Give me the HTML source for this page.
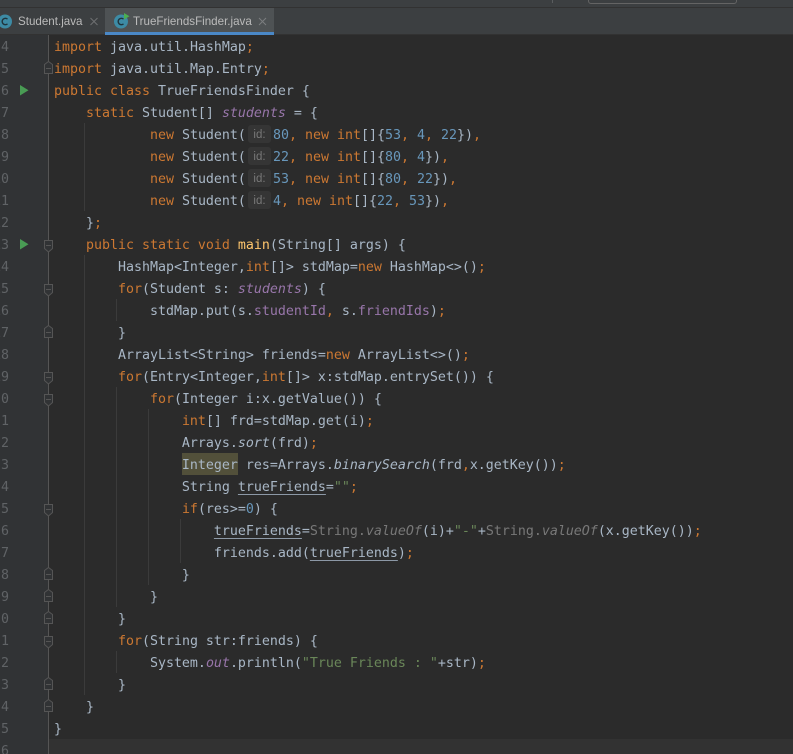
<!DOCTYPE html>
<html><head><meta charset="utf-8"><style>
html,body{margin:0;padding:0;background:#2b2b2b}
#r{position:relative;width:793px;height:754px;overflow:hidden;background:#2b2b2b;font-family:"DejaVu Sans Mono","Liberation Mono",monospace;font-size:13.29px;color:#a9b7c6}
.a{position:absolute}
.l{position:absolute;left:54px;height:22px;line-height:22px;white-space:pre;margin-top:2px}
.n{position:absolute;left:-20px;width:29px;text-align:right;height:22px;line-height:22px;color:#606366;white-space:pre;margin-top:2px}
.g{position:absolute;width:1px;background:#3b3b3b}
.k{color:#cc7832}.i{color:#6897bb}.s{color:#6a8759}.f{color:#9876aa}.fi{color:#9876aa;font-style:italic}.m{color:#ffc66d}.e{font-style:italic}.d{color:#787878}.u{text-decoration:underline;text-underline-offset:3px;text-decoration-thickness:1px;text-decoration-color:#8c98a6}
.h{position:absolute;left:248px;width:23px;height:18px;background:#353535;border-radius:3px;color:#787878;font:11.5px/20px "Liberation Sans",sans-serif;text-align:center}
.t{position:absolute;top:8px;height:26px;font:11.6px/28px "Liberation Sans",sans-serif;color:#bbbbbb;white-space:pre}
</style></head><body><div id="r">
<div class="a" style="left:0;top:0;width:793px;height:35px;background:#3c3f41"></div>
<div class="a" style="left:0;top:7px;width:793px;height:1px;background:#323232"></div>
<div class="a" style="left:552px;top:0;width:1px;height:3px;background:#5a5d5f"></div>
<div class="a" style="left:588px;top:-6px;width:147px;height:8px;border:1px solid #646464;border-radius:3px"></div>
<div class="a" style="left:0;top:34px;width:793px;height:1px;background:#323232"></div>
<div class="a" style="left:105px;top:8px;width:169px;height:24px;background:#4e5254"></div>
<div class="a" style="left:105px;top:32px;width:169px;height:3px;background:#4a88c7"></div>
<svg class="a" style="left:0;top:8px" width="280" height="26">
<circle cx="5" cy="13.500" r="7" fill="#3d8ba5"/><path d="M7.500 11.100A3.200 3.200 0 1 0 7.500 15.900" fill="none" stroke="#20343c" stroke-width="1.400"/>
<path d="M90.500 10l7 7M97.500 10l-7 7" stroke="#6e7072" stroke-width="1"/>
<circle cx="121" cy="13.500" r="7" fill="#3d8ba5"/><path d="M123.500 11.100A3.200 3.200 0 1 0 123.500 15.900" fill="none" stroke="#20343c" stroke-width="1.400"/>
<path d="M124 5v6.500l5.500-3.250z" fill="#4caf50"/>
<path d="M259 10l7 7M266 10l-7 7" stroke="#7b7d7f" stroke-width="1"/>
</svg>
<div class="t" style="left:18px">Student.java</div>
<div class="t" style="left:133px">TrueFriendsFinder.java</div>
<div class="a" style="left:0;top:35px;width:48px;height:719px;background:#313335"></div>
<div class="a" style="left:49px;top:739px;width:744px;height:15px;background:#323232"></div>
<div class="a" style="left:48px;top:35px;width:1px;height:719px;background:#555555"></div>
<svg class="a" style="left:0;top:0" width="60" height="754" fill="#313335" stroke="#555555" stroke-width="1">
<g>
<path d="M44.500 61.500v9l4 3 4-3v-9z" transform="rotate(180 48.500 67.500)"/><path d="M46 68.500h5"/>
<path d="M44.500 240.500h8v8l-4 3.500-4-3.500z"/><path d="M46 245.500h5"/>
<path d="M44.500 284.500h8v8l-4 3.500-4-3.500z"/><path d="M46 289.500h5"/>
<path d="M44.500 372.500h8v8l-4 3.500-4-3.500z"/><path d="M46 377.500h5"/>
<path d="M44.500 394.500h8v8l-4 3.500-4-3.500z"/><path d="M46 399.500h5"/>
<path d="M44.500 504.500h8v8l-4 3.500-4-3.500z"/><path d="M46 509.500h5"/>
<path d="M44.500 636.500h8v8l-4 3.500-4-3.500z"/><path d="M46 641.500h5"/>
<path d="M44.500 325.500v9l4 3 4-3v-9z" transform="rotate(180 48.500 331.500)"/><path d="M46 332.500h5"/>
<path d="M44.500 567.500v9l4 3 4-3v-9z" transform="rotate(180 48.500 573.500)"/><path d="M46 574.500h5"/>
<path d="M44.500 589.500v9l4 3 4-3v-9z" transform="rotate(180 48.500 595.500)"/><path d="M46 596.500h5"/>
<path d="M44.500 611.500v9l4 3 4-3v-9z" transform="rotate(180 48.500 617.500)"/><path d="M46 618.500h5"/>
<path d="M44.500 677.500v9l4 3 4-3v-9z" transform="rotate(180 48.500 683.500)"/><path d="M46 684.500h5"/>
<path d="M44.500 699.500v9l4 3 4-3v-9z" transform="rotate(180 48.500 705.500)"/><path d="M46 706.500h5"/>
</g>
<path d="M20 85v10.500l8.500-5.250z" fill="#499c54" stroke="none"/>
<path d="M20 239v10.500l8.500-5.250z" fill="#499c54" stroke="none"/>
</svg>
<div class="g" style="left:84px;top:123px;height:88px"></div>
<div class="g" style="left:84px;top:255px;height:440px"></div>
<div class="g" style="left:116px;top:299px;height:22px"></div>
<div class="g" style="left:116px;top:387px;height:220px"></div>
<div class="g" style="left:148px;top:409px;height:176px"></div>
<div class="g" style="left:180px;top:519px;height:44px"></div>
<div class="g" style="left:116px;top:651px;height:22px"></div>
<div class="a" style="left:182px;top:453px;width:56px;height:22px;background:#52503a"></div>
<div class="n" style="top:35px">4</div><div class="n" style="top:57px">5</div><div class="n" style="top:79px">6</div><div class="n" style="top:101px">7</div><div class="n" style="top:123px">8</div><div class="n" style="top:145px">9</div><div class="n" style="top:167px">10</div><div class="n" style="top:189px">11</div><div class="n" style="top:211px">12</div><div class="n" style="top:233px">13</div><div class="n" style="top:255px">14</div><div class="n" style="top:277px">15</div><div class="n" style="top:299px">16</div><div class="n" style="top:321px">17</div><div class="n" style="top:343px">18</div><div class="n" style="top:365px">19</div><div class="n" style="top:387px">20</div><div class="n" style="top:409px">21</div><div class="n" style="top:431px">22</div><div class="n" style="top:453px">23</div><div class="n" style="top:475px">24</div><div class="n" style="top:497px">25</div><div class="n" style="top:519px">26</div><div class="n" style="top:541px">27</div><div class="n" style="top:563px">28</div><div class="n" style="top:585px">29</div><div class="n" style="top:607px">30</div><div class="n" style="top:629px">31</div><div class="n" style="top:651px">32</div><div class="n" style="top:673px">33</div><div class="n" style="top:695px">34</div><div class="n" style="top:717px">35</div><div class="n" style="top:739px">36</div>
<div class="l" style="top:35px"><span class="k">import</span> java.util.HashMap<span class="k">;</span></div>
<div class="l" style="top:57px"><span class="k">import</span> java.util.Map.Entry<span class="k">;</span></div>
<div class="l" style="top:79px"><span class="k">public class</span> TrueFriendsFinder {</div>
<div class="l" style="top:101px">    <span class="k">static</span> Student[] <span class="fi">students</span> = {</div>
<div class="l" style="top:123px">            <span class="k">new</span> Student(</div><div class="h" style="top:125px">id:</div><div class="l" style="top:123px;left:273px"><span class="i">80</span><span class="k">,</span> <span class="k">new int</span>[]{<span class="i">53</span><span class="k">,</span> <span class="i">4</span><span class="k">,</span> <span class="i">22</span>})<span class="k">,</span></div>
<div class="l" style="top:145px">            <span class="k">new</span> Student(</div><div class="h" style="top:147px">id:</div><div class="l" style="top:145px;left:273px"><span class="i">22</span><span class="k">,</span> <span class="k">new int</span>[]{<span class="i">80</span><span class="k">,</span> <span class="i">4</span>})<span class="k">,</span></div>
<div class="l" style="top:167px">            <span class="k">new</span> Student(</div><div class="h" style="top:169px">id:</div><div class="l" style="top:167px;left:273px"><span class="i">53</span><span class="k">,</span> <span class="k">new int</span>[]{<span class="i">80</span><span class="k">,</span> <span class="i">22</span>})<span class="k">,</span></div>
<div class="l" style="top:189px">            <span class="k">new</span> Student(</div><div class="h" style="top:191px">id:</div><div class="l" style="top:189px;left:273px"><span class="i">4</span><span class="k">,</span> <span class="k">new int</span>[]{<span class="i">22</span><span class="k">,</span> <span class="i">53</span>})<span class="k">,</span></div>
<div class="l" style="top:211px">    }<span class="k">;</span></div>
<div class="l" style="top:233px">    <span class="k">public static void</span> <span class="m">main</span>(String[] args) {</div>
<div class="l" style="top:255px">        HashMap&lt;Integer,<span class="k">int</span>[]&gt; stdMap=<span class="k">new</span> HashMap&lt;&gt;()<span class="k">;</span></div>
<div class="l" style="top:277px">        <span class="k">for</span>(Student s: <span class="fi">students</span>) {</div>
<div class="l" style="top:299px">            stdMap.put(s.<span class="f">studentId</span><span class="k">,</span> s.<span class="f">friendIds</span>)<span class="k">;</span></div>
<div class="l" style="top:321px">        }</div>
<div class="l" style="top:343px">        ArrayList&lt;String&gt; friends=<span class="k">new</span> ArrayList&lt;&gt;()<span class="k">;</span></div>
<div class="l" style="top:365px">        <span class="k">for</span>(Entry&lt;Integer,<span class="k">int</span>[]&gt; x:stdMap.entrySet()) {</div>
<div class="l" style="top:387px">            <span class="k">for</span>(Integer i:x.getValue()) {</div>
<div class="l" style="top:409px">                <span class="k">int</span>[] frd=stdMap.get(i)<span class="k">;</span></div>
<div class="l" style="top:431px">                Arrays.<span class="e">sort</span>(frd)<span class="k">;</span></div>
<div class="l" style="top:453px">                Integer res=Arrays.<span class="e">binarySearch</span>(frd<span class="k">,</span>x.getKey())<span class="k">;</span></div>
<div class="l" style="top:475px">                String <span class="u">trueFriends</span>=<span class="s">""</span><span class="k">;</span></div>
<div class="l" style="top:497px">                <span class="k">if</span>(res&gt;=<span class="i">0</span>) {</div>
<div class="l" style="top:519px">                    <span class="u">trueFriends</span>=<span class="d">String.<span class="e">valueOf</span></span>(i)+<span class="s">"-"</span>+<span class="d">String.<span class="e">valueOf</span></span>(x.getKey())<span class="k">;</span></div>
<div class="l" style="top:541px">                    friends.add(<span class="u">trueFriends</span>)<span class="k">;</span></div>
<div class="l" style="top:563px">                }</div>
<div class="l" style="top:585px">            }</div>
<div class="l" style="top:607px">        }</div>
<div class="l" style="top:629px">        <span class="k">for</span>(String str:friends) {</div>
<div class="l" style="top:651px">            System.<span class="fi">out</span>.println(<span class="s">"True Friends : "</span>+str)<span class="k">;</span></div>
<div class="l" style="top:673px">        }</div>
<div class="l" style="top:695px">    }</div>
<div class="l" style="top:717px">}</div>
</div></body></html>
